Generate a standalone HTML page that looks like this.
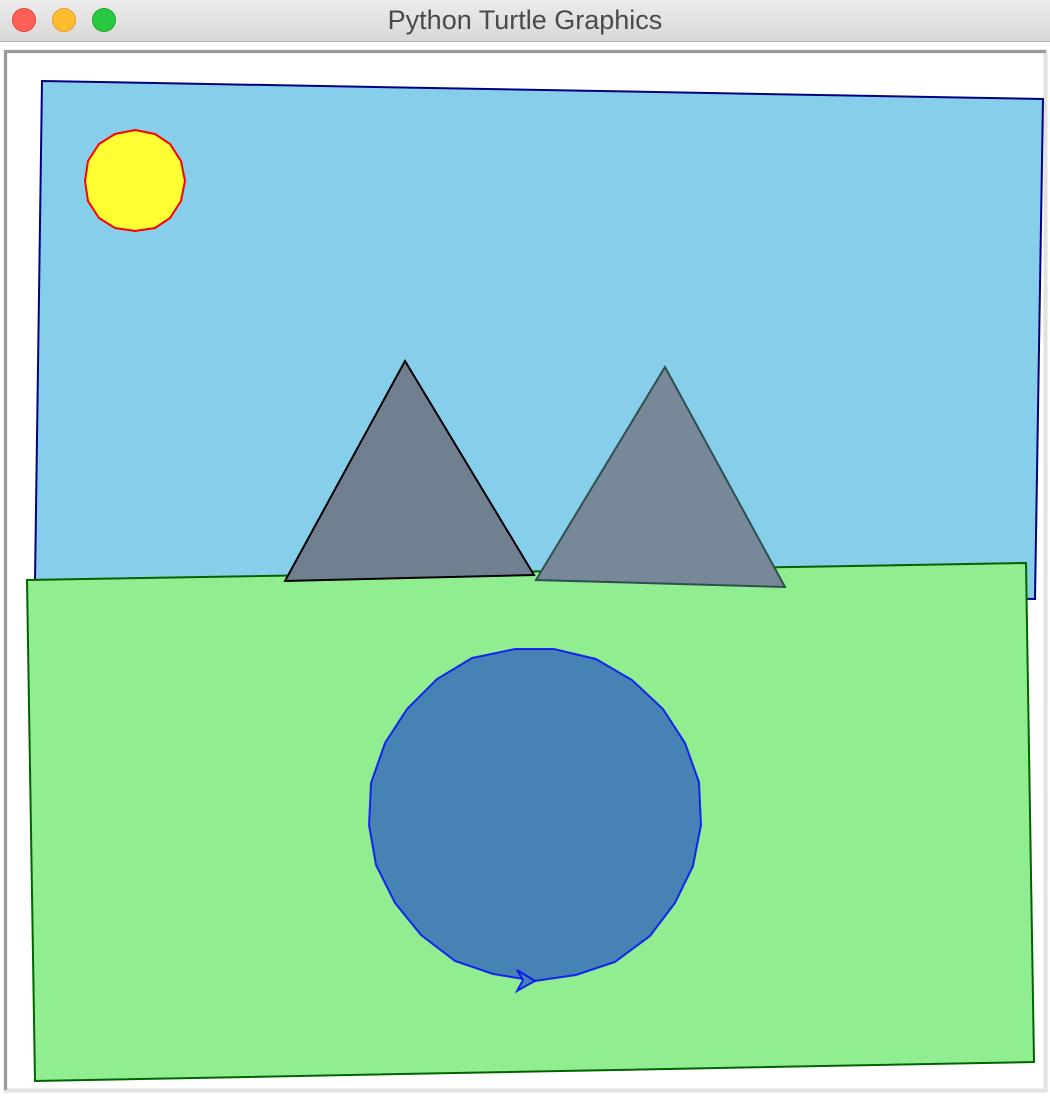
<!DOCTYPE html>
<html><head><style>
html,body{margin:0;padding:0;background:#fff;width:1050px;height:1100px;overflow:hidden}
.tb{position:absolute;left:0;top:0;width:1050px;height:41px;background:linear-gradient(#ececec,#d8d8d8);border-bottom:1px solid #b8b8b8;font-family:"Liberation Sans",sans-serif;font-size:27px;color:#4a4a4a;text-align:center;line-height:41px}
.d{position:absolute;top:8px;width:24px;height:24px;border-radius:50%}
</style></head><body>
<div class="tb">Python Turtle Graphics</div>
<div class="d" style="left:12px;background:#fe5f57;border:1px solid #e0443e;box-sizing:border-box"></div>
<div class="d" style="left:52px;background:#febc2e;border:1px solid #dea123;box-sizing:border-box"></div>
<div class="d" style="left:92px;background:#28c840;border:1px solid #1aab29;box-sizing:border-box"></div>
<svg style="position:absolute;left:0;top:0" width="1050" height="1100">
<rect x="5.5" y="51.5" width="1040" height="1039" fill="#fff" stroke="#e2e2e2" stroke-width="4"/>
<path d="M5.5 1090 V51.5 H1046" fill="none" stroke="#9a9a9a" stroke-width="3"/>
<polygon points="42,81 1043,99 1035,599 35,581" fill="#87ceeb" stroke="#000080" stroke-width="2"/>
<polygon points="135,130 155,134 170,144 181,161 185,181 181,201 170,218 155,228 135,231 115,228 99,218 88,201 85,181 88,161 99,144 115,134" fill="#ffff33" stroke="#ff0000" stroke-width="2"/>
<polygon points="27,580 1026,563 1034,1062 35,1081" fill="#90ee90" stroke="#006400" stroke-width="2"/>
<polygon points="285,581 405,361 534,575" fill="#708090" stroke="#000" stroke-width="2"/>
<polygon points="536,580 665,367 785,587" fill="#778899" stroke="#2f4f4f" stroke-width="2"/>
<polygon points="515,649 554,649 596,659 632,680 663,709 685,743 699,782 701,825 693,866 675,903 650,936 615,962 576,975 535,981 493,974 455,961 421,935 395,903 376,865 369,825 371,783 385,743 407,709 437,679 472,658" fill="#4682b4" stroke="#0000ff" stroke-opacity="0.8" stroke-width="2"/>
<polygon points="535,981 517,970 523,980 517,991" fill="#4682b4" stroke="#0000ff" stroke-opacity="0.8" stroke-width="2"/>
</svg>
</body></html>
